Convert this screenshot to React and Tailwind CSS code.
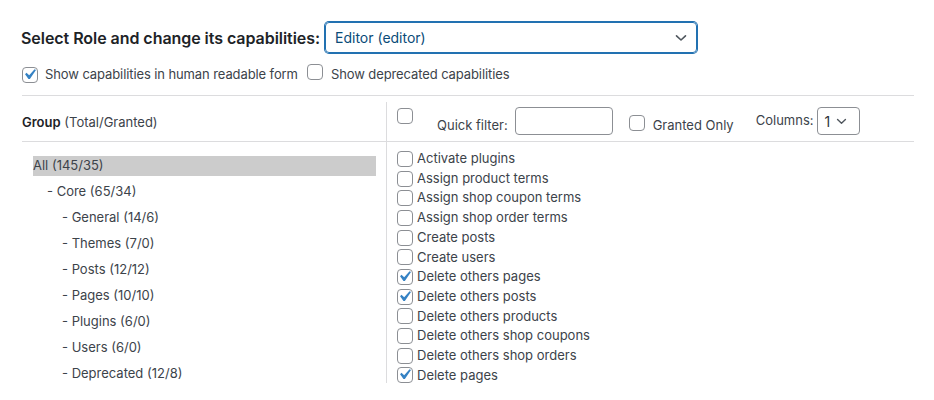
const caps = [
  ["Activate plugins", false],
  ["Assign product terms", false],
  ["Assign shop coupon terms", false],
  ["Assign shop order terms", false],
  ["Create posts", false],
  ["Create users", false],
  ["Delete others pages", true],
  ["Delete others posts", true],
  ["Delete others products", false],
  ["Delete others shop coupons", false],
  ["Delete others shop orders", false],
  ["Delete pages", true],
];

const groups = [
  ["All (145/35)", 0],
  ["- Core (65/34)", 1],
  ["- General (14/6)", 2],
  ["- Themes (7/0)", 2],
  ["- Posts (12/12)", 2],
  ["- Pages (10/10)", 2],
  ["- Plugins (6/0)", 2],
  ["- Users (6/0)", 2],
  ["- Deprecated (12/8)", 2],
];

function Checkbox({ checked }) {
  return (
    <span className="relative inline-flex w-4 h-4 shrink-0 rounded-[4px] border border-[#8c8f94] bg-white">
      {checked && (
        <svg
          viewBox="0 0 20 20"
          className="absolute w-[21px] h-[21px] -left-[4px] -top-[4px]"
        >
          <path
            d="M14.83 4.89l1.34.94-5.81 8.38H9.02L5.78 9.67l1.34-1.25 2.57 2.4z"
            fill="#3582c4"
          />
        </svg>
      )}
    </span>
  );
}

function Chevron({ className }) {
  return (
    <svg viewBox="0 0 12 8" className={className}>
      <path
        d="M1.5 1.8l4.5 4.2 4.5-4.2"
        fill="none"
        stroke="currentColor"
        strokeWidth="1.6"
        strokeLinecap="round"
        strokeLinejoin="round"
      />
    </svg>
  );
}

const indents = ["pl-[1px]", "pl-[15px]", "pl-[30px]"];

export default function App() {
  return (
    <div className="w-[934px] h-[400px] bg-white pl-[21px] pr-5 font-['Inter','Liberation_Sans',sans-serif] text-[13px] text-[#3c434a]">
      <div className="pt-[22px] flex items-center">
        <span className="text-[16px] font-semibold text-[#1d2327] tracking-[-0.05px]">
          Select Role and change its capabilities:
        </span>
        <div className="ml-[5px] w-[372px] h-[31px] flex items-center justify-between pl-[9px] pr-[9px] rounded-[4px] border border-[#2271b1] shadow-[0_0_0_1px_#2271b1] text-[#0a4b78] text-[14px]">
          <span>Editor (editor)</span>
          <Chevron className="w-[12px] h-[8px] text-[#50575e]" />
        </div>
      </div>

      <div className="mt-[14px] flex items-center h-[16px] pl-[1px]">
        <Checkbox checked />
        <span className="ml-[7px] tracking-[-0.1px]">Show capabilities in human readable form</span>
        <span className="ml-[9px]">
          <Checkbox />
        </span>
        <span className="ml-[8px] tracking-[-0.1px]">Show deprecated capabilities</span>
      </div>

      <div className="mt-[12px] ml-[1px] border-t border-[#dcdcde]">
        <div className="flex h-[46px] border-b border-[#dcdcde]">
          <div className="w-[364px] pt-[17px]">
            <span className="font-semibold text-[#1d2327]">Group</span> (Total/Granted)
          </div>
          <div className="flex-1 mt-[6px] border-l border-[#dcdcde] flex items-start pl-[10px]">
            <span className="mt-[6px]">
              <Checkbox />
            </span>
            <span className="ml-[24px] mt-[14px]">Quick filter:</span>
            <div className="ml-[7px] mt-[5px] w-[98px] h-[28px] rounded-[4px] border border-[#8c8f94]" />
            <span className="ml-[16px] mt-[13px]">
              <Checkbox />
            </span>
            <span className="ml-[8px] mt-[14px]">Granted Only</span>
            <span className="ml-[22px] mt-[9px]">Columns:</span>
            <div className="ml-[3px] mt-[5px] w-[43px] h-[28px] rounded-[4px] border border-[#8c8f94] flex items-center pl-[7px] gap-[6px] text-[#2c3338] text-[14px]">
              <span>1</span>
              <Chevron className="w-[11px] h-[7px] text-[#50575e]" />
            </div>
          </div>
        </div>

        <div className="flex h-[241px]">
          <div className="w-[364px] pt-[14px] pl-[10px] pr-[10px]">
            {groups.map(([label, level], i) => (
              <div
                key={label}
                className={"h-[26px] flex items-start " + indents[level]}
              >
                <div
                  className={
                    "h-[20px] flex items-center " +
                    (i === 0 ? "bg-[#cccccc] w-full" : "")
                  }
                >
                  {label}
                </div>
              </div>
            ))}
          </div>
          <div className="flex-1 border-l border-[#dcdcde] pt-[7px] pl-[10px]">
            {caps.map(([label, checked]) => (
              <div key={label} className="h-[19.7px] flex items-center">
                <Checkbox checked={checked} />
                <span className="ml-[4px]">{label}</span>
              </div>
            ))}
          </div>
        </div>
      </div>
    </div>
  );
}
